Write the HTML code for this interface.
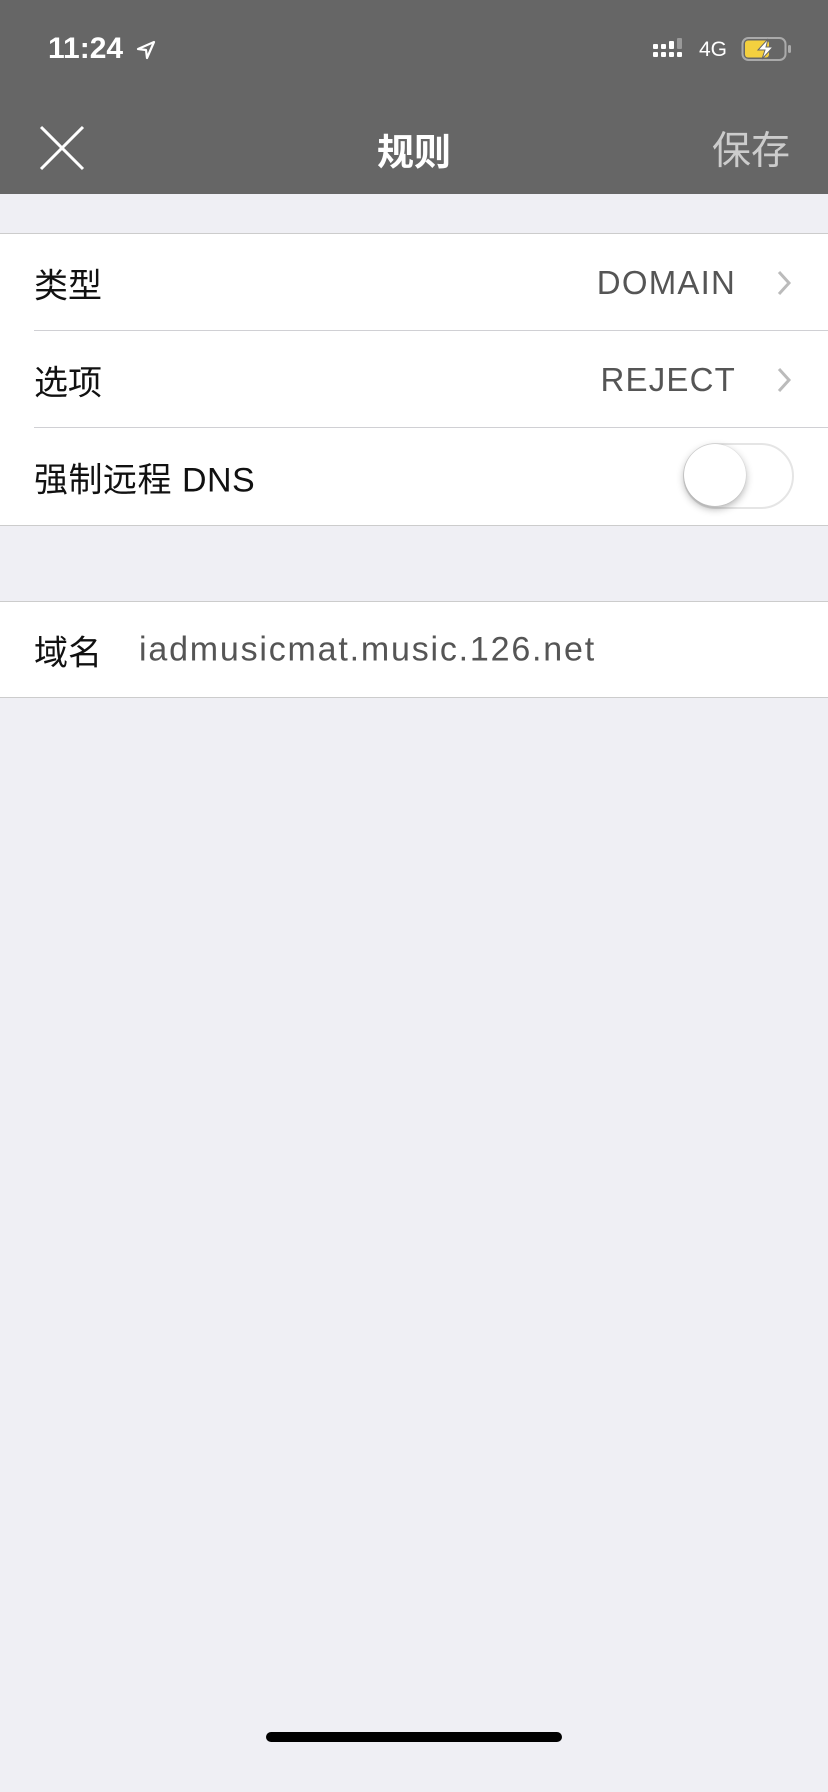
<!DOCTYPE html>
<html><head><meta charset="utf-8"><style>
*{margin:0;padding:0;box-sizing:border-box}
body{width:828px;height:1792px;background:#efeff4;font-family:"Liberation Sans","Noto Sans CJK SC",sans-serif;position:relative;overflow:hidden}
.nav{position:absolute;left:0;top:0;width:828px;height:194px;background:#666}
.abs{position:absolute}
.group{position:absolute;left:0;width:828px;background:#fff;border-top:1px solid #ccc;border-bottom:1px solid #ccc}
.row{position:relative;height:97px;font-size:34px;color:#111}
.row .l{position:absolute;left:34px;top:50%;transform:translateY(-50%)}
.sep{position:absolute;left:34px;right:0;bottom:0;height:1px;background:#d0d0d4}
.val{position:absolute;right:92px;top:50%;transform:translateY(-50%);color:#555;font-size:33px;letter-spacing:1.2px}
.chev{position:absolute;right:36px;top:50%;transform:translateY(-50%)}
</style></head><body>
<div class="nav"></div>
<div class="abs" style="left:48px;top:32px;color:#fff;font-size:30px;font-weight:bold">11:24</div>
<svg class="abs" style="left:136px;top:40px" width="20" height="20" viewBox="0 0 20 20"><path d="M18 2 L2 9 L10 10 L11 18 Z" fill="none" stroke="#fff" stroke-width="2.2" stroke-linejoin="round"/></svg>
<svg class="abs" style="left:653px;top:38px" width="36" height="22" viewBox="0 0 36 22"><g fill="#fff"><rect x="0" y="6" width="5" height="5" rx="1"/><rect x="0" y="14" width="5" height="5" rx="1"/><rect x="8" y="6" width="5" height="5" rx="1"/><rect x="8" y="14" width="5" height="5" rx="1"/><rect x="16" y="3" width="5" height="8" rx="1"/><rect x="16" y="14" width="5" height="5" rx="1"/><rect x="24" y="14" width="5" height="5" rx="1"/></g><rect x="24" y="0" width="5" height="11" rx="1" fill="#999"/></svg>
<div class="abs" style="left:699px;top:38px;color:#fff;font-size:21px">4G</div>
<svg class="abs" style="left:741px;top:36px" width="52" height="26" viewBox="0 0 52 26"><rect x="1.5" y="2" width="43" height="22" rx="6" fill="none" stroke="#aaa" stroke-width="2"/><rect x="4" y="4.5" width="24" height="17" rx="3" fill="#f4d03f"/><rect x="47" y="9" width="3" height="8" rx="1.5" fill="#aaa"/><path d="M27 3 L17 14 H24 L21 23 L32 11 H25 Z" fill="#fff" stroke="#666" stroke-width="1"/></svg>
<svg class="abs" style="left:38px;top:124px" width="48" height="48" viewBox="0 0 48 48"><path d="M3 3 L45 45 M45 3 L3 45" stroke="#fff" stroke-width="3"/></svg>
<div class="abs" style="left:0;width:828px;top:122px;text-align:center;color:#fff;font-size:37px;font-weight:bold">规则</div>
<div class="abs" style="right:38px;top:120px;color:#ccc;font-size:39px">保存</div>

<div class="group" style="top:233px">
 <div class="row"><span class="l">类型</span><span class="val">DOMAIN</span>
 <svg class="chev" width="16" height="28" viewBox="0 0 16 28"><path d="M3 3 L13 14 L3 25" fill="none" stroke="#bbb" stroke-width="3"/></svg><div class="sep"></div></div>
 <div class="row"><span class="l">选项</span><span class="val">REJECT</span>
 <svg class="chev" width="16" height="28" viewBox="0 0 16 28"><path d="M3 3 L13 14 L3 25" fill="none" stroke="#bbb" stroke-width="3"/></svg><div class="sep"></div></div>
 <div class="row"><span class="l" style="letter-spacing:0.5px">强制远程 DNS</span>
 <div class="abs" style="left:683px;top:15px;width:111px;height:66px;border-radius:33px;border:2px solid #e5e5e5;background:#fff"></div>
 <div class="abs" style="left:684px;top:16px;width:62px;height:62px;border-radius:50%;background:#fff;box-shadow:0 3px 8px rgba(0,0,0,.3),0 0 1px rgba(0,0,0,.2)"></div>
 </div>
</div>

<div class="group" style="top:601px">
 <div class="row" style="height:95px"><span class="l">域名</span><span class="abs" style="left:139px;top:50%;transform:translateY(-50%);color:#555;font-size:34px;letter-spacing:1.8px">iadmusicmat.music.126.net</span></div>
</div>

<div class="abs" style="left:266px;top:1732px;width:296px;height:10px;border-radius:5px;background:#000"></div>
</body></html>
